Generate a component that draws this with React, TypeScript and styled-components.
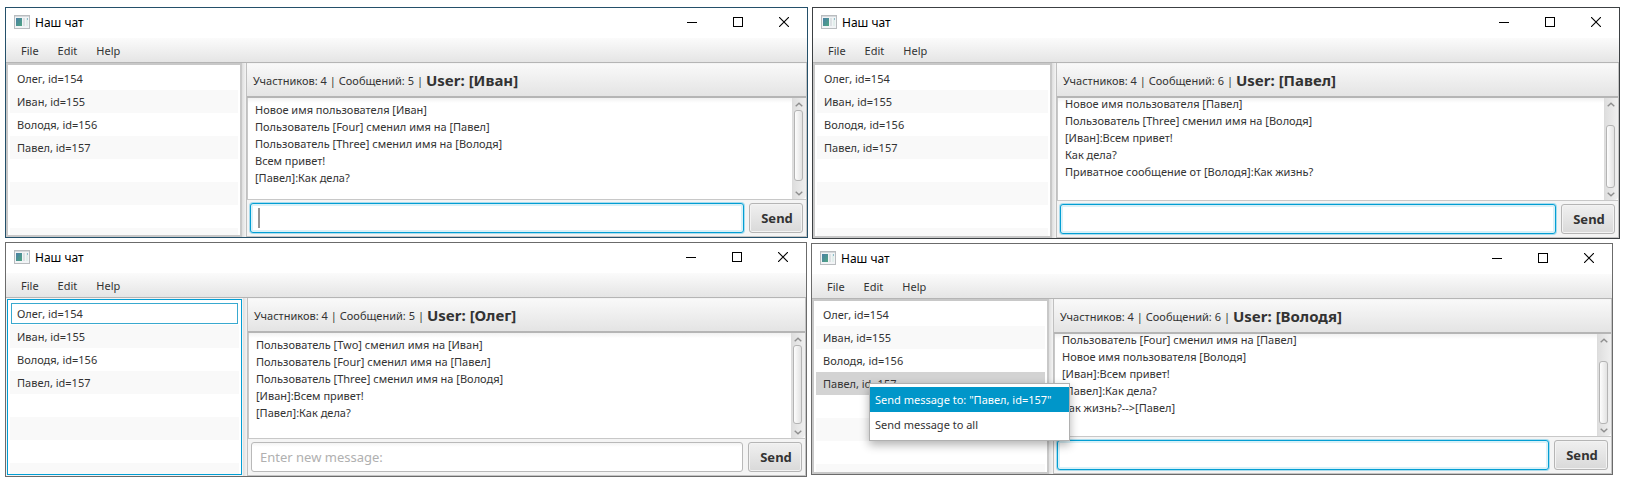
import React from 'react';
import styled, { createGlobalStyle, css } from 'styled-components';

const GlobalStyle = createGlobalStyle`
  *, *::before, *::after { box-sizing: border-box; }
  body {
    margin: 0;
    background: #fff;
    color: #333;
    font-family: 'Noto Sans', 'Open Sans', sans-serif;
    font-size: 11px;
  }
  button, input { font-family: inherit; color: inherit; margin: 0; }
`;

const Desktop = styled.main`
  display: grid;
  grid-template-columns: 803fr 809fr;
  gap: 3px;
  padding: 7px 6px 7px 5px;
`;

const Column = styled.div`
  display: flex;
  flex-direction: column;
  gap: 4px;
  min-width: 0;
`;

const Frame = styled.section<{ $edge: string; $left: number; $right: number }>`
  position: relative;
  display: flex;
  flex-direction: column;
  margin: 0 ${p => p.$right}px 0 ${p => p.$left}px;
  border: 1px solid ${p => p.$edge};
  background: #f4f4f4;
`;

const TitleBar = styled.header`
  display: flex;
  align-items: center;
  height: 30px;
  padding: 0 0 2px 8px;
  background: #fff;
  color: #000;
`;

const Title = styled.h1`
  flex: 1;
  margin: 0 0 0 5px;
  font-size: 12px;
  font-weight: 400;
`;

const CaptionButton = styled.button`
  display: flex;
  align-items: center;
  justify-content: center;
  width: 46px;
  height: 28px;
  padding: 0;
  border: 0;
  background: none;
`;

const Captions = styled.div`
  display: flex;
`;

const MenuBar = styled.nav`
  display: flex;
  align-items: center;
  height: 25px;
  padding-left: 5px;
  border-bottom: 1px solid #b5b5b5;
  background: linear-gradient(#fbfbfb, #e5e5e5);
`;

const MenuButton = styled.button`
  height: 24px;
  padding: 0 9px 0 10px;
  border: 0;
  background: none;
  font-size: 11px;
`;

const Body = styled.div<{ $height: number }>`
  display: flex;
  height: ${p => p.$height}px;
`;

const People = styled.ul<{ $width: number; $focused?: boolean }>`
  flex: 0 0 ${p => p.$width}px;
  margin: 0;
  padding: 2px;
  list-style: none;
  overflow: hidden;
  background: #fff;
  border: 2px solid #c8c8c8;
  ${p => p.$focused && css`
    border: 1px solid #039ed3;
    margin: 1px 1px 1px 1px;
    flex-basis: ${p.$width - 2}px;
  `}
`;

const Person = styled.li<{ $selected?: boolean; $focused?: boolean }>`
  display: flex;
  align-items: center;
  height: 23px;
  padding: 0 7px 1px;
  &:nth-child(even) { background: #f9f9f9; }
  ${p => p.$selected && css`
    &&& { background: #d3d3d3; }
  `}
  ${p => p.$focused && css`
    outline: 1px solid #39a9cf;
    outline-offset: -2px;
  `}
`;

const Divider = styled.div`
  flex: 0 0 5px;
  border-right: 1px solid #c0c0c0;
  background: linear-gradient(90deg, #dedede, #f4f4f4);
`;

const Chat = styled.div`
  flex: 1;
  display: flex;
  flex-direction: column;
  min-width: 0;
  border-right: 1px solid #c4c4c4;
  border-bottom: 1px solid #c4c4c4;
`;

const StatusBar = styled.div`
  flex: 0 0 34px;
  display: flex;
  align-items: center;
  margin-top: 1px;
  padding: 0 6px;
  gap: 3px;
  border-bottom: 2px solid #b5b5b5;
  background: linear-gradient(#f9f9f9, #e4e4e4);
`;

const UserName = styled.strong`
  font-size: 15px;
  line-height: 20px;
`;

const LogFrame = styled.div`
  flex: 1;
  display: flex;
  min-height: 0;
  border-left: 1px solid #c8c8c8;
  border-bottom: 1px solid #c8c8c8;
  background: linear-gradient(#f1f1f1, #fff 5px);
`;

const Log = styled.div<{ $atEnd?: boolean }>`
  flex: 1;
  display: flex;
  flex-direction: column;
  justify-content: ${p => (p.$atEnd ? 'flex-end' : 'flex-start')};
  padding: ${p => (p.$atEnd ? '0 7px 20px' : '3px 7px')};
  overflow: hidden;
`;

const Message = styled.p`
  flex: none;
  margin: 0;
  line-height: 17px;
  white-space: nowrap;
`;

const Scroller = styled.div`
  flex: 0 0 14px;
  display: flex;
  flex-direction: column;
  align-items: center;
  padding-right: 2px;
  border-left: 1px solid #dcdcdc;
  border-radius: 0 0 4px 0;
  background: linear-gradient(90deg, #dedede, #efefef);
`;

const ScrollButton = styled.button`
  display: flex;
  align-items: center;
  justify-content: center;
  width: 11px;
  height: 12px;
  padding: 0;
  border: 0;
  background: none;
`;

const Track = styled.div<{ $atEnd?: boolean }>`
  flex: 1;
  display: flex;
  align-items: ${p => (p.$atEnd ? 'flex-end' : 'flex-start')};
`;

const Thumb = styled.div<{ $share: number }>`
  width: 9px;
  height: ${p => p.$share}%;
  border: 1px solid #b4b4b4;
  border-radius: 3px;
  background: linear-gradient(90deg, #fdfdfd, #e2e2e2);
`;

const Composer = styled.form`
  flex: none;
  display: flex;
  gap: 5px;
  padding: 3px;
`;

const Field = styled.div`
  position: relative;
  flex: 1;
  min-width: 0;
`;

const Input = styled.input<{ $active?: boolean }>`
  display: block;
  width: 100%;
  height: 30px;
  padding: 0 8px;
  border: 1px solid #b9b9b9;
  border-radius: 3px;
  outline: 0;
  background: linear-gradient(#f3f3f3, #fff 4px);
  font-size: 13px;
  &::placeholder { color: #b0b0b0; opacity: 1; }
  ${p => p.$active && css`
    border-color: #039ed3;
    background: #fff;
    box-shadow: 0 0 0 1px #a8dcee, inset 0 0 0 2px #d9f1f8;
  `}
`;

const Caret = styled.span`
  position: absolute;
  left: 8px;
  top: 5px;
  width: 2px;
  height: 20px;
  background: #969696;
`;

const SendButton = styled.button`
  flex: 0 0 54px;
  height: 30px;
  padding: 0 0 0 2px;
  border: 1px solid #b5b5b5;
  border-radius: 3px;
  background: linear-gradient(#f0f0f0, #d9d9d9);
  box-shadow: inset 0 0 0 1px #f3f3f3;
  font-size: 13px;
  font-weight: 700;
`;

const ContextMenu = styled.div`
  position: absolute;
  left: 57px;
  top: 139px;
  z-index: 2;
  width: 201px;
  padding: 3px 0;
  border: 1px solid #b0b0b0;
  background: #fff;
  box-shadow: 0 4px 9px rgba(0, 0, 0, 0.3);
`;

const ContextItem = styled.button<{ $active?: boolean }>`
  display: block;
  width: 100%;
  height: 25px;
  padding: 0 5px;
  border: 0;
  background: ${p => (p.$active ? '#0096c9' : 'none')};
  color: ${p => (p.$active ? '#fff' : '#333')};
  font-size: 11px;
  text-align: left;
  white-space: nowrap;
`;

const AppIcon = () => (
  <svg width="16" height="14" viewBox="0 0 16 14" aria-hidden="true">
    <defs>
      <linearGradient id="pane" x1="0" y1="0" x2="1" y2="1">
        <stop offset="0" stopColor="#4a7fa5" />
        <stop offset="1" stopColor="#4fa583" />
      </linearGradient>
    </defs>
    <rect x="0.5" y="0.5" width="15" height="13" fill="#f2f4f6" stroke="#b9bcbf" />
    <rect x="1" y="1" width="14" height="1" fill="#d5d9dc" />
    <rect x="2" y="3" width="6" height="8" fill="url(#pane)" />
    <rect x="9" y="3" width="2" height="8" fill="#dde1e4" />
    <rect x="12" y="3" width="2" height="8" fill="#e2efec" />
    <rect x="13" y="3" width="1" height="2" fill="#8fbccb" />
  </svg>
);

const Minimize = () => (
  <svg width="10" height="10" viewBox="0 0 10 10" aria-hidden="true">
    <rect y="5" width="10" height="1" fill="#000" />
  </svg>
);

const Maximize = () => (
  <svg width="10" height="10" viewBox="0 0 10 10" aria-hidden="true">
    <rect x="0.5" y="0.5" width="9" height="9" fill="none" stroke="#000" />
  </svg>
);

const Close = () => (
  <svg width="10" height="10" viewBox="0 0 10 10" aria-hidden="true">
    <path d="M0 0L10 10M10 0L0 10" stroke="#000" strokeWidth="1.1" />
  </svg>
);

const Chevron = ({ down }: { down?: boolean }) => (
  <svg width="8" height="5" viewBox="0 0 8 5" aria-hidden="true">
    <path
      d={down ? 'M0.7 0.8L4 3.8L7.3 0.8' : 'M0.7 4.2L4 1.2L7.3 4.2'}
      fill="none"
      stroke="#8e8e8e"
      strokeWidth="1.4"
    />
  </svg>
);

const PEOPLE = ['Олег, id=154', 'Иван, id=155', 'Володя, id=156', 'Павел, id=157'];
const EMPTY_ROWS = [0, 1, 2, 3];

interface ChatProps {
  user: string;
  count: number;
  messages: string[];
  edge: string;
  bodyHeight: number;
  listWidth: number;
  thumb: number;
  left?: number;
  right?: number;
  atEnd?: boolean;
  inputActive?: boolean;
  caret?: boolean;
  focusedPerson?: number;
  selectedPerson?: number;
  menu?: string[];
}

function ChatWindow(p: ChatProps) {
  return (
    <Frame $edge={p.edge} $left={p.left ?? 0} $right={p.right ?? 0}>
      <TitleBar>
        <AppIcon />
        <Title>Наш чат</Title>
        <Captions>
          <CaptionButton type="button" aria-label="Minimize"><Minimize /></CaptionButton>
          <CaptionButton type="button" aria-label="Maximize"><Maximize /></CaptionButton>
          <CaptionButton type="button" aria-label="Close"><Close /></CaptionButton>
        </Captions>
      </TitleBar>
      <MenuBar>
        {['File', 'Edit', 'Help'].map(name => (
          <MenuButton key={name} type="button">{name}</MenuButton>
        ))}
      </MenuBar>
      <Body $height={p.bodyHeight}>
        <People $width={p.listWidth} $focused={p.focusedPerson !== undefined}>
          {PEOPLE.map((name, i) => (
            <Person key={name} $focused={p.focusedPerson === i} $selected={p.selectedPerson === i}>
              {name}
            </Person>
          ))}
          {EMPTY_ROWS.map(i => <Person key={i} aria-hidden="true" />)}
        </People>
        <Divider />
        <Chat>
          <StatusBar>
            <span>Участников: 4</span>
            <span>|</span>
            <span>Сообщений: {p.count}</span>
            <span>|</span>
            <UserName>User: [{p.user}]</UserName>
          </StatusBar>
          <LogFrame>
            <Log role="log" $atEnd={p.atEnd}>
              {p.messages.map(m => <Message key={m}>{m}</Message>)}
            </Log>
            <Scroller>
              <ScrollButton type="button" aria-label="Scroll up"><Chevron /></ScrollButton>
              <Track $atEnd={p.atEnd}><Thumb $share={p.thumb} /></Track>
              <ScrollButton type="button" aria-label="Scroll down"><Chevron down /></ScrollButton>
            </Scroller>
          </LogFrame>
          <Composer onSubmit={e => e.preventDefault()}>
            <Field>
              <Input
                type="text"
                aria-label="Message"
                $active={p.inputActive}
                placeholder={p.inputActive ? undefined : 'Enter new message:'}
              />
              {p.caret && <Caret />}
            </Field>
            <SendButton type="submit">Send</SendButton>
          </Composer>
        </Chat>
      </Body>
      {p.menu && (
        <ContextMenu role="menu">
          {p.menu.map((label, i) => (
            <ContextItem key={label} type="button" role="menuitem" $active={i === 0}>{label}</ContextItem>
          ))}
        </ContextMenu>
      )}
    </Frame>
  );
}

export default function App() {
  return (
    <>
      <GlobalStyle />
      <Desktop>
        <Column>
          <ChatWindow
            user="Иван"
            count={5}
            edge="#24506a"
            bodyHeight={174}
            listWidth={236}
            thumb={92}
            inputActive
            caret
            messages={[
              'Новое имя пользователя [Иван]',
              'Пользователь [Four] сменил имя на [Павел]',
              'Пользователь [Three] сменил имя на [Володя]',
              'Всем привет!',
              '[Павел]:Как дела?',
            ]}
          />
          <ChatWindow
            user="Олег"
            count={5}
            edge="#6b6b6b"
            bodyHeight={178}
            listWidth={237}
            thumb={97}
            right={1}
            focusedPerson={0}
            messages={[
              'Пользователь [Two] сменил имя на [Иван]',
              'Пользователь [Four] сменил имя на [Павел]',
              'Пользователь [Three] сменил имя на [Володя]',
              '[Иван]:Всем привет!',
              '[Павел]:Как дела?',
            ]}
          />
        </Column>
        <Column>
          <ChatWindow
            user="Павел"
            count={6}
            edge="#3c4043"
            bodyHeight={175}
            listWidth={239}
            thumb={81}
            left={1}
            atEnd
            inputActive
            messages={[
              'Новое имя пользователя [Павел]',
              'Пользователь [Three] сменил имя на [Володя]',
              '[Иван]:Всем привет!',
              'Как дела?',
              'Приватное сообщение от [Володя]:Как жизнь?',
            ]}
          />
          <ChatWindow
            user="Володя"
            count={6}
            edge="#6b6b6b"
            bodyHeight={175}
            listWidth={237}
            thumb={81}
            right={7}
            atEnd
            inputActive
            selectedPerson={3}
            menu={['Send message to: "Павел, id=157"', 'Send message to all']}
            messages={[
              'Пользователь [Four] сменил имя на [Павел]',
              'Новое имя пользователя [Володя]',
              '[Иван]:Всем привет!',
              '[Павел]:Как дела?',
              'Как жизнь?-->[Павел]',
            ]}
          />
        </Column>
      </Desktop>
    </>
  );
}
